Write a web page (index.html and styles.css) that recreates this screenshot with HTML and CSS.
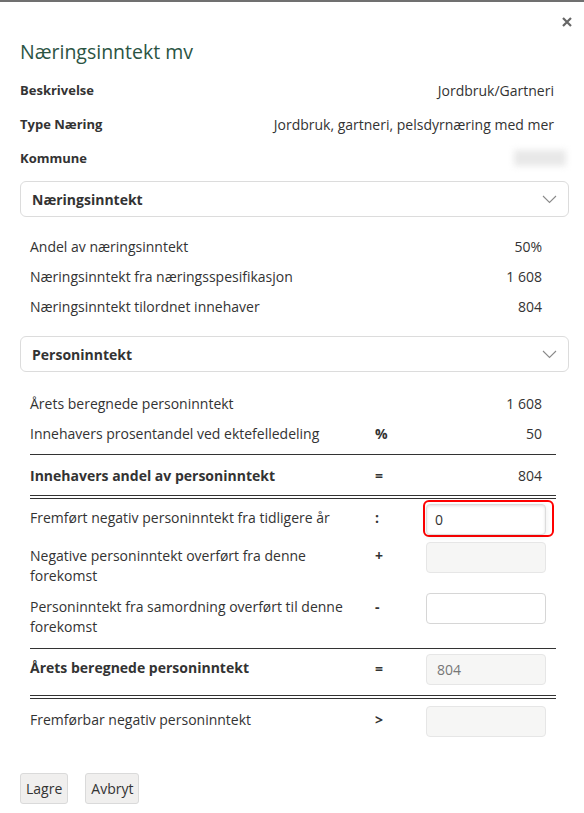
FILE: index.html
```html
<!DOCTYPE html>
<html>
  <head>
    <title>Næringsinntekt mv</title>
    <link rel="stylesheet" href="styles.css">
  </head>
  <body>
    <div class="modal">
      <div class="topp">
        <svg class="lukk" width="10" height="10" viewBox="0 0 10 10"><path d="M1 1 L9 9 M9 1 L1 9" stroke="#666" stroke-width="2.2"/></svg>
      </div>
      <h2 class="tittel">Næringsinntekt mv</h2>

      <div class="info">
        <div class="info-rad"><label>Beskrivelse</label><span>Jordbruk/Gartneri</span></div>
        <div class="info-rad"><label>Type Næring</label><span>Jordbruk, gartneri, pelsdyrnæring med mer</span></div>
        <div class="info-rad"><label>Kommune</label><span class="skjult"></span></div>
      </div>

      <div class="panel">
        <span>Næringsinntekt</span>
        <svg class="pil" width="15" height="9" viewBox="0 0 15 9"><path d="M1 1 L7.5 7.5 L14 1" fill="none" stroke="#8a8a8a" stroke-width="1.1"/></svg>
      </div>
      <div class="seksjon">
        <div class="rad"><span class="tekst">Andel av næringsinntekt</span><span></span><span class="verdi">50%</span></div>
        <div class="rad"><span class="tekst">Næringsinntekt fra næringsspesifikasjon</span><span></span><span class="verdi">1 608</span></div>
        <div class="rad"><span class="tekst">Næringsinntekt tilordnet innehaver</span><span></span><span class="verdi">804</span></div>
      </div>

      <div class="panel">
        <span>Personinntekt</span>
        <svg class="pil" width="15" height="9" viewBox="0 0 15 9"><path d="M1 1 L7.5 7.5 L14 1" fill="none" stroke="#8a8a8a" stroke-width="1.1"/></svg>
      </div>
      <div class="seksjon siste">
        <div class="rad"><span class="tekst">Årets beregnede personinntekt</span><span></span><span class="verdi">1 608</span></div>
        <div class="rad"><span class="tekst">Innehavers prosentandel ved ektefelledeling</span><span class="op">%</span><span class="verdi">50</span></div>

        <div class="strek"></div>
        <div class="rad sum"><span class="tekst">Innehavers andel av personinntekt</span><span class="op">=</span><span class="verdi">804</span></div>
        <div class="dobbel"></div>

        <div class="felt-rader">
          <div class="felt-rad">
            <span class="tekst">Fremført negativ personinntekt fra tidligere år</span>
            <span class="op">:</span>
            <div class="ring"><input type="text" value="0"/></div>
          </div>
          <div class="felt-rad">
            <span class="tekst">Negative personinntekt overført fra denne forekomst</span>
            <span class="op">+</span>
            <input type="text" class="laast" disabled/>
          </div>
          <div class="felt-rad">
            <span class="tekst">Personinntekt fra samordning overført til denne forekomst</span>
            <span class="op">-</span>
            <input type="text"/>
          </div>
        </div>

        <div class="strek lang"></div>
        <div class="felt-rad sum-felt">
          <span class="tekst">Årets beregnede personinntekt</span>
          <span class="op">=</span>
          <input type="text" class="laast" value="804" disabled/>
        </div>
        <div class="dobbel"></div>
        <div class="felt-rad siste-felt">
          <span class="tekst">Fremførbar negativ personinntekt</span>
          <span class="op">&gt;</span>
          <input type="text" class="laast" disabled/>
        </div>
      </div>

      <div class="knapper">
        <button>Lagre</button>
        <button>Avbryt</button>
      </div>
    </div>
  </body>
</html>
```

FILE: styles.css
```css
body{
  margin: 0;
  font-family: "Open Sans", "Liberation Sans", sans-serif;
  font-size: 14px;
  color: #333;
  background: #fff;
}
.modal{
  border-top: 2px solid #707070;
  padding: 10px 15px 0 20px;
}
.topp{
  display: flex;
  justify-content: flex-end;
  align-items: center;
  height: 20px;
}
.lukk{
  margin-right: -3px;
}
.tittel{
  margin: 8px 0 0 0;
  font-size: 19.5px;
  font-weight: normal;
  line-height: 24px;
  color: #2b5443;
}
.info{
  margin-top: 9px;
}
.info-rad{
  display: flex;
  justify-content: space-between;
  align-items: center;
  height: 34px;
  padding-right: 15px;
}
.info-rad label{
  font-size: 13px;
  font-weight: bold;
}
.skjult{
  display: block;
  width: 52px;
  height: 16px;
  margin-right: -12px;
  background: #e8e8e8;
  filter: blur(3px);
}
.panel{
  margin-top: 6px;
  height: 34px;
  border: 1px solid #dcdcdc;
  border-radius: 6px;
  display: flex;
  justify-content: space-between;
  align-items: center;
  padding: 0 11px 0 11px;
  font-weight: bold;
}
.seksjon{
  padding: 14px 13px 9px 10px;
}
.siste{
  padding-top: 16px;
  padding-bottom: 0;
}
.rad,
.felt-rad{
  display: grid;
  grid-template-columns: 340px 56px 120px 10px;
}
.rad{
  height: 30px;
  align-items: center;
}
.verdi{
  text-align: right;
  padding-right: 4px;
}
.op{
  font-weight: bold;
  padding-left: 5px;
}
.strek{
  border-top: 1px solid #333;
  margin-top: 6px;
}
.lang{
  margin-top: 11px;
}
.dobbel{
  height: 2px;
  border-top: 1px solid #333;
  border-bottom: 1px solid #333;
}
.sum{
  height: 40px;
}
.sum .tekst,
.sum .op{
  font-weight: bold;
}
.felt-rader{
  display: flex;
  flex-direction: column;
  gap: 7px;
  margin-top: 5px;
}
.felt-rad{
  align-items: start;
  line-height: 20px;
}
.felt-rad .tekst,
.felt-rad .op{
  padding-top: 4px;
}
.felt-rad .tekst{
  padding-right: 20px;
}
input{
  box-sizing: border-box;
  width: 120px;
  height: 31px;
  padding: 0 10px;
  border: 1px solid #d6d6d6;
  border-radius: 4px;
  background: #fff;
  font-family: "Open Sans", "Liberation Sans", sans-serif;
  font-size: 14px;
  color: #333;
  outline-style: none;
}
.laast{
  background: #f6f6f5;
  border-color: #e6e6e6;
  color: #777;
}
.ring{
  margin: -4px -8px -2px -3px;
  padding: 2px 6px 0 1px;
  border: 2px solid #f00;
  border-radius: 6px;
  width: 120px;
}
.ring input{
  display: block;
  border-color: #dcdcdc;
  box-shadow: inset 0 1px 3px rgba(0,0,0,.12), 0 2px 6px rgba(0,0,0,.08);
  padding-left: 8px;
}
.sum-felt{
  margin-top: 5px;
  margin-bottom: 10px;
  font-weight: bold;
}
.sum-felt input{
  font-weight: normal;
}
.sum-felt .op{
  padding-top: 5px;
}
.siste-felt{
  margin-top: 7px;
}
.knapper{
  display: flex;
  gap: 17px;
  margin-top: 36px;
}
button{
  height: 31px;
  padding: 0 5px;
  border: 1px solid #dadada;
  border-radius: 3px;
  background: #f0efee;
  font-family: "Open Sans", "Liberation Sans", sans-serif;
  font-size: 14px;
  color: #333;
}
```
